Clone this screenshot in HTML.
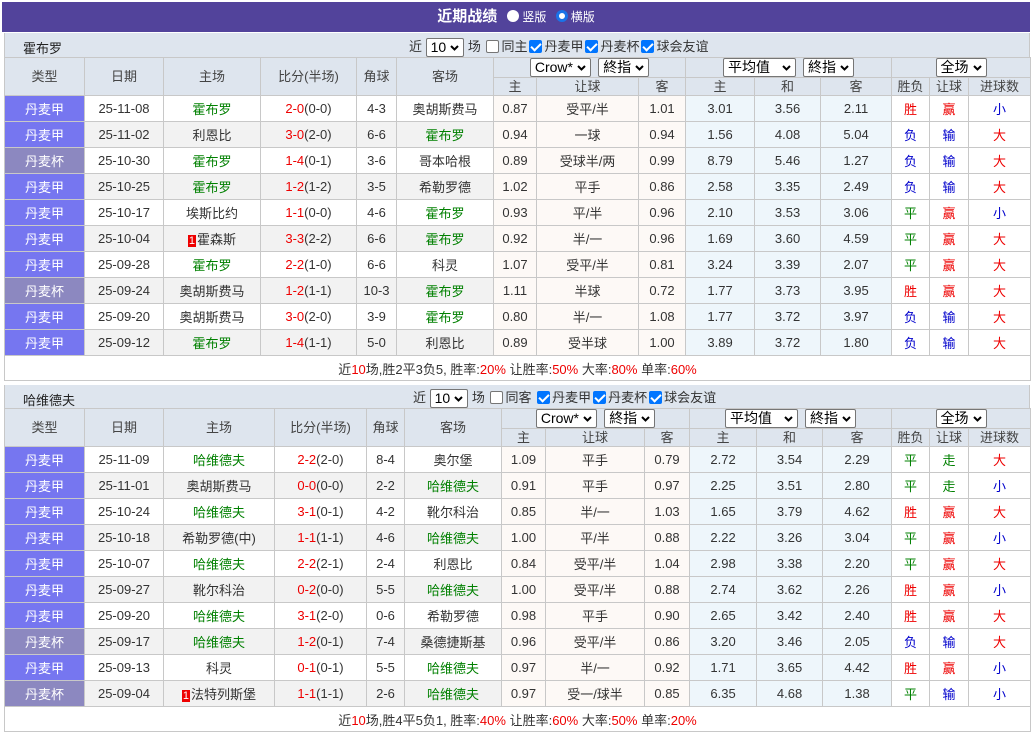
<!DOCTYPE html>
<html><head><meta charset="utf-8"><style>
*{box-sizing:border-box}
body{margin:0;background:#fff;font-family:"Liberation Sans","Noto Sans CJK SC",sans-serif;font-size:13px;color:#333;width:1032px;height:735px;overflow:hidden;position:relative}
.title{position:absolute;left:2px;top:2px;width:1028px;height:30px;background:#52439b;color:#fff;font-weight:bold;font-size:15px;line-height:30px;text-align:center}
.title .r{font-weight:normal;font-size:12px}
.rad{display:inline-block;width:12px;height:12px;border-radius:50%;background:#fff;vertical-align:-1px;margin:0 3px 0 6px}
.rad.on{border:3px solid #1a73e8;background:#fff}
.team{position:absolute;left:4px;width:1026px;height:24px;background:#dee5ee;border-left:1px solid #c8c8c8;border-right:1px solid #c8c8c8}
.team .n{position:absolute;left:18px;top:5px;font-size:13px;color:#222}
.team .c{position:absolute;top:3px;font-size:13px;color:#333;white-space:nowrap}
.sel{display:inline-block;border:1px solid #767676;background:#fff;border-radius:2px;height:19px;line-height:17px;padding:0 4px;font-size:14px;color:#000;vertical-align:middle}
.sel svg{vertical-align:1px;margin-left:4px}
.cb{display:inline-block;width:13px;height:13px;border:1px solid #767676;border-radius:2px;background:#fff;vertical-align:-2px;margin:0 2px}
.cb.on{background:#0075ff;border-color:#0075ff;position:relative}
.cb.on:after{content:"";position:absolute;left:3px;top:0px;width:4px;height:8px;border:solid #fff;border-width:0 2px 2px 0;transform:rotate(45deg)}
table{position:absolute;left:4px;width:1026px;border-collapse:collapse;table-layout:fixed}
td{border:1px solid #c8c8c8;text-align:center;padding:0;white-space:nowrap;overflow:hidden;height:26px}
thead td{background:#dee5ee;height:18px;font-size:13px;color:#444;line-height:16px}
thead tr.h1 td.sp{height:20px}
.t1{background:#7676f0;color:#fff}
.t2{background:#8c88c0;color:#fff}
tbody tr:nth-child(even) td{background:#f2f2f2}
tbody tr td.a,tbody tr:nth-child(even) td.a{background:#fdf9f6}
tbody tr td.e,tbody tr:nth-child(even) td.e{background:#eef6fb}
tbody tr td.t1{background:#7676f0!important}
tbody tr td.t2{background:#8c88c0!important}
tbody tr:nth-child(even) td.w{background:#fff}
.g{color:#008000}.rd{color:#e00}.b{color:#0000cc}
.rk{background:#e00;color:#fff;font-size:11px;padding:0 1px;margin-right:1px}
tr.sum td{background:#fff!important;height:25px;font-size:13px}
</style></head><body>
<div class="title">近期战绩 <span class="r"><span class="rad"></span>竖版 <span class="rad on"></span>横版</span></div>

<div class="team" style="top:33px"><span class="n">霍布罗</span><span class="c" style="left:404px">近 <span class="sel">10<svg width="9" height="6"><path d="M1 1l3.5 3.5L8 1" stroke="#000" stroke-width="2" fill="none"/></svg></span> 场 <span class="cb"></span>同主<span class="cb on"></span>丹麦甲<span class="cb on"></span>丹麦杯<span class="cb on"></span>球会友谊</span></div>
<table style="top:57px">
<colgroup><col style="width:80px"><col style="width:79px"><col style="width:97px"><col style="width:96px"><col style="width:40px"><col style="width:97px"><col style="width:43px"><col style="width:102px"><col style="width:47px"><col style="width:69px"><col style="width:66px"><col style="width:71px"><col style="width:38px"><col style="width:39px"><col style="width:62px"></colgroup>
<thead>
<tr class="h1"><td rowspan="2">类型</td><td rowspan="2">日期</td><td rowspan="2">主场</td><td rowspan="2">比分(半场)</td><td rowspan="2">角球</td><td rowspan="2">客场</td><td colspan="3" class="sp"><span class="sel">Crow*<svg width="9" height="6"><path d="M1 1l3.5 3.5L8 1" stroke="#000" stroke-width="2" fill="none"/></svg></span> &nbsp;<span class="sel">終指<svg width="9" height="6"><path d="M1 1l3.5 3.5L8 1" stroke="#000" stroke-width="2" fill="none"/></svg></span></td><td colspan="3" class="sp"><span class="sel">平均值 &nbsp;<svg width="9" height="6"><path d="M1 1l3.5 3.5L8 1" stroke="#000" stroke-width="2" fill="none"/></svg></span> &nbsp;<span class="sel">終指<svg width="9" height="6"><path d="M1 1l3.5 3.5L8 1" stroke="#000" stroke-width="2" fill="none"/></svg></span></td><td colspan="3" class="sp"><span class="sel">全场<svg width="9" height="6"><path d="M1 1l3.5 3.5L8 1" stroke="#000" stroke-width="2" fill="none"/></svg></span></td></tr>
<tr><td>主</td><td>让球</td><td>客</td><td>主</td><td>和</td><td>客</td><td>胜负</td><td>让球</td><td>进球数</td></tr>
</thead>
<tbody>
<tr><td class="t1">丹麦甲</td><td>25-11-08</td><td class="g">霍布罗</td><td><span class="rd">2-0</span>(0-0)</td><td>4-3</td><td>奥胡斯费马</td><td class="a">0.87</td><td class="a">受平/半</td><td class="a">1.01</td><td class="e">3.01</td><td class="e">3.56</td><td class="e">2.11</td><td class="w rd">胜</td><td class="w rd">赢</td><td class="w b">小</td></tr>
<tr><td class="t1">丹麦甲</td><td>25-11-02</td><td>利恩比</td><td><span class="rd">3-0</span>(2-0)</td><td>6-6</td><td class="g">霍布罗</td><td class="a">0.94</td><td class="a">一球</td><td class="a">0.94</td><td class="e">1.56</td><td class="e">4.08</td><td class="e">5.04</td><td class="w b">负</td><td class="w b">输</td><td class="w rd">大</td></tr>
<tr><td class="t2">丹麦杯</td><td>25-10-30</td><td class="g">霍布罗</td><td><span class="rd">1-4</span>(0-1)</td><td>3-6</td><td>哥本哈根</td><td class="a">0.89</td><td class="a">受球半/两</td><td class="a">0.99</td><td class="e">8.79</td><td class="e">5.46</td><td class="e">1.27</td><td class="w b">负</td><td class="w b">输</td><td class="w rd">大</td></tr>
<tr><td class="t1">丹麦甲</td><td>25-10-25</td><td class="g">霍布罗</td><td><span class="rd">1-2</span>(1-2)</td><td>3-5</td><td>希勒罗德</td><td class="a">1.02</td><td class="a">平手</td><td class="a">0.86</td><td class="e">2.58</td><td class="e">3.35</td><td class="e">2.49</td><td class="w b">负</td><td class="w b">输</td><td class="w rd">大</td></tr>
<tr><td class="t1">丹麦甲</td><td>25-10-17</td><td>埃斯比约</td><td><span class="rd">1-1</span>(0-0)</td><td>4-6</td><td class="g">霍布罗</td><td class="a">0.93</td><td class="a">平/半</td><td class="a">0.96</td><td class="e">2.10</td><td class="e">3.53</td><td class="e">3.06</td><td class="w g">平</td><td class="w rd">赢</td><td class="w b">小</td></tr>
<tr><td class="t1">丹麦甲</td><td>25-10-04</td><td><span class="rk">1</span>霍森斯</td><td><span class="rd">3-3</span>(2-2)</td><td>6-6</td><td class="g">霍布罗</td><td class="a">0.92</td><td class="a">半/一</td><td class="a">0.96</td><td class="e">1.69</td><td class="e">3.60</td><td class="e">4.59</td><td class="w g">平</td><td class="w rd">赢</td><td class="w rd">大</td></tr>
<tr><td class="t1">丹麦甲</td><td>25-09-28</td><td class="g">霍布罗</td><td><span class="rd">2-2</span>(1-0)</td><td>6-6</td><td>科灵</td><td class="a">1.07</td><td class="a">受平/半</td><td class="a">0.81</td><td class="e">3.24</td><td class="e">3.39</td><td class="e">2.07</td><td class="w g">平</td><td class="w rd">赢</td><td class="w rd">大</td></tr>
<tr><td class="t2">丹麦杯</td><td>25-09-24</td><td>奥胡斯费马</td><td><span class="rd">1-2</span>(1-1)</td><td>10-3</td><td class="g">霍布罗</td><td class="a">1.11</td><td class="a">半球</td><td class="a">0.72</td><td class="e">1.77</td><td class="e">3.73</td><td class="e">3.95</td><td class="w rd">胜</td><td class="w rd">赢</td><td class="w rd">大</td></tr>
<tr><td class="t1">丹麦甲</td><td>25-09-20</td><td>奥胡斯费马</td><td><span class="rd">3-0</span>(2-0)</td><td>3-9</td><td class="g">霍布罗</td><td class="a">0.80</td><td class="a">半/一</td><td class="a">1.08</td><td class="e">1.77</td><td class="e">3.72</td><td class="e">3.97</td><td class="w b">负</td><td class="w b">输</td><td class="w rd">大</td></tr>
<tr><td class="t1">丹麦甲</td><td>25-09-12</td><td class="g">霍布罗</td><td><span class="rd">1-4</span>(1-1)</td><td>5-0</td><td>利恩比</td><td class="a">0.89</td><td class="a">受半球</td><td class="a">1.00</td><td class="e">3.89</td><td class="e">3.72</td><td class="e">1.80</td><td class="w b">负</td><td class="w b">输</td><td class="w rd">大</td></tr>
<tr class="sum"><td colspan="15">近<span class="rd">10</span>场,胜2平3负5, 胜率:<span class="rd">20%</span> 让胜率:<span class="rd">50%</span> 大率:<span class="rd">80%</span> 单率:<span class="rd">60%</span></td></tr>
</tbody></table>

<div class="team" style="top:385px"><span class="n" style="top:5px">哈维德夫</span><span class="c" style="left:408px;top:2px">近 <span class="sel">10<svg width="9" height="6"><path d="M1 1l3.5 3.5L8 1" stroke="#000" stroke-width="2" fill="none"/></svg></span> 场 <span class="cb"></span>同客 <span class="cb on"></span>丹麦甲<span class="cb on"></span>丹麦杯<span class="cb on"></span>球会友谊</span></div>
<table style="top:408px">
<colgroup><col style="width:80px"><col style="width:79px"><col style="width:111px"><col style="width:92px"><col style="width:38px"><col style="width:97px"><col style="width:44px"><col style="width:99px"><col style="width:45px"><col style="width:67px"><col style="width:66px"><col style="width:69px"><col style="width:38px"><col style="width:39px"><col style="width:62px"></colgroup>
<thead>
<tr class="h1"><td rowspan="2">类型</td><td rowspan="2">日期</td><td rowspan="2">主场</td><td rowspan="2">比分(半场)</td><td rowspan="2">角球</td><td rowspan="2">客场</td><td colspan="3" class="sp"><span class="sel">Crow*<svg width="9" height="6"><path d="M1 1l3.5 3.5L8 1" stroke="#000" stroke-width="2" fill="none"/></svg></span> &nbsp;<span class="sel">終指<svg width="9" height="6"><path d="M1 1l3.5 3.5L8 1" stroke="#000" stroke-width="2" fill="none"/></svg></span></td><td colspan="3" class="sp"><span class="sel">平均值 &nbsp;<svg width="9" height="6"><path d="M1 1l3.5 3.5L8 1" stroke="#000" stroke-width="2" fill="none"/></svg></span> &nbsp;<span class="sel">終指<svg width="9" height="6"><path d="M1 1l3.5 3.5L8 1" stroke="#000" stroke-width="2" fill="none"/></svg></span></td><td colspan="3" class="sp"><span class="sel">全场<svg width="9" height="6"><path d="M1 1l3.5 3.5L8 1" stroke="#000" stroke-width="2" fill="none"/></svg></span></td></tr>
<tr><td>主</td><td>让球</td><td>客</td><td>主</td><td>和</td><td>客</td><td>胜负</td><td>让球</td><td>进球数</td></tr>
</thead>
<tbody>
<tr><td class="t1">丹麦甲</td><td>25-11-09</td><td class="g">哈维德夫</td><td><span class="rd">2-2</span>(2-0)</td><td>8-4</td><td>奥尔堡</td><td class="a">1.09</td><td class="a">平手</td><td class="a">0.79</td><td class="e">2.72</td><td class="e">3.54</td><td class="e">2.29</td><td class="w g">平</td><td class="w g">走</td><td class="w rd">大</td></tr>
<tr><td class="t1">丹麦甲</td><td>25-11-01</td><td>奥胡斯费马</td><td><span class="rd">0-0</span>(0-0)</td><td>2-2</td><td class="g">哈维德夫</td><td class="a">0.91</td><td class="a">平手</td><td class="a">0.97</td><td class="e">2.25</td><td class="e">3.51</td><td class="e">2.80</td><td class="w g">平</td><td class="w g">走</td><td class="w b">小</td></tr>
<tr><td class="t1">丹麦甲</td><td>25-10-24</td><td class="g">哈维德夫</td><td><span class="rd">3-1</span>(0-1)</td><td>4-2</td><td>靴尔科治</td><td class="a">0.85</td><td class="a">半/一</td><td class="a">1.03</td><td class="e">1.65</td><td class="e">3.79</td><td class="e">4.62</td><td class="w rd">胜</td><td class="w rd">赢</td><td class="w rd">大</td></tr>
<tr><td class="t1">丹麦甲</td><td>25-10-18</td><td>希勒罗德(中)</td><td><span class="rd">1-1</span>(1-1)</td><td>4-6</td><td class="g">哈维德夫</td><td class="a">1.00</td><td class="a">平/半</td><td class="a">0.88</td><td class="e">2.22</td><td class="e">3.26</td><td class="e">3.04</td><td class="w g">平</td><td class="w rd">赢</td><td class="w b">小</td></tr>
<tr><td class="t1">丹麦甲</td><td>25-10-07</td><td class="g">哈维德夫</td><td><span class="rd">2-2</span>(2-1)</td><td>2-4</td><td>利恩比</td><td class="a">0.84</td><td class="a">受平/半</td><td class="a">1.04</td><td class="e">2.98</td><td class="e">3.38</td><td class="e">2.20</td><td class="w g">平</td><td class="w rd">赢</td><td class="w rd">大</td></tr>
<tr><td class="t1">丹麦甲</td><td>25-09-27</td><td>靴尔科治</td><td><span class="rd">0-2</span>(0-0)</td><td>5-5</td><td class="g">哈维德夫</td><td class="a">1.00</td><td class="a">受平/半</td><td class="a">0.88</td><td class="e">2.74</td><td class="e">3.62</td><td class="e">2.26</td><td class="w rd">胜</td><td class="w rd">赢</td><td class="w b">小</td></tr>
<tr><td class="t1">丹麦甲</td><td>25-09-20</td><td class="g">哈维德夫</td><td><span class="rd">3-1</span>(2-0)</td><td>0-6</td><td>希勒罗德</td><td class="a">0.98</td><td class="a">平手</td><td class="a">0.90</td><td class="e">2.65</td><td class="e">3.42</td><td class="e">2.40</td><td class="w rd">胜</td><td class="w rd">赢</td><td class="w rd">大</td></tr>
<tr><td class="t2">丹麦杯</td><td>25-09-17</td><td class="g">哈维德夫</td><td><span class="rd">1-2</span>(0-1)</td><td>7-4</td><td>桑德捷斯基</td><td class="a">0.96</td><td class="a">受平/半</td><td class="a">0.86</td><td class="e">3.20</td><td class="e">3.46</td><td class="e">2.05</td><td class="w b">负</td><td class="w b">输</td><td class="w rd">大</td></tr>
<tr><td class="t1">丹麦甲</td><td>25-09-13</td><td>科灵</td><td><span class="rd">0-1</span>(0-1)</td><td>5-5</td><td class="g">哈维德夫</td><td class="a">0.97</td><td class="a">半/一</td><td class="a">0.92</td><td class="e">1.71</td><td class="e">3.65</td><td class="e">4.42</td><td class="w rd">胜</td><td class="w rd">赢</td><td class="w b">小</td></tr>
<tr><td class="t2">丹麦杯</td><td>25-09-04</td><td><span class="rk">1</span>法特列斯堡</td><td><span class="rd">1-1</span>(1-1)</td><td>2-6</td><td class="g">哈维德夫</td><td class="a">0.97</td><td class="a">受一/球半</td><td class="a">0.85</td><td class="e">6.35</td><td class="e">4.68</td><td class="e">1.38</td><td class="w g">平</td><td class="w b">输</td><td class="w b">小</td></tr>
<tr class="sum"><td colspan="15">近<span class="rd">10</span>场,胜4平5负1, 胜率:<span class="rd">40%</span> 让胜率:<span class="rd">60%</span> 大率:<span class="rd">50%</span> 单率:<span class="rd">20%</span></td></tr>
</tbody></table>
</body></html>
